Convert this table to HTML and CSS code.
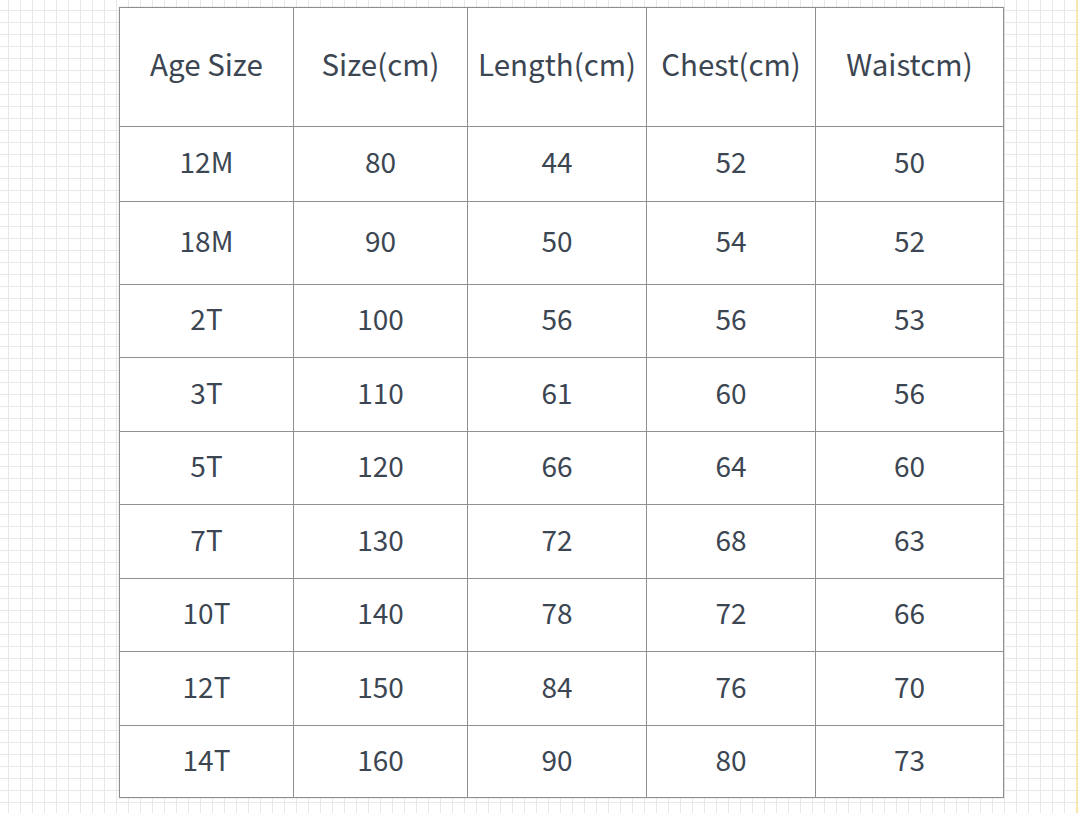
FILE: index.html
```html
<!DOCTYPE html>
<html lang="en">
<head>
<meta charset="utf-8">
<title>Size Chart</title>
<link rel="stylesheet" href="styles.css">
</head>
<body>
<div class="page">
  <div class="chart">
    <div class="cell head">Age Size</div>
    <div class="cell head">Size(cm)</div>
    <div class="cell head">Length(cm)</div>
    <div class="cell head">Chest(cm)</div>
    <div class="cell head">Waistcm)</div>

    <div class="cell">12M</div><div class="cell">80</div><div class="cell">44</div><div class="cell">52</div><div class="cell">50</div>
    <div class="cell">18M</div><div class="cell">90</div><div class="cell">50</div><div class="cell">54</div><div class="cell">52</div>
    <div class="cell">2T</div><div class="cell">100</div><div class="cell">56</div><div class="cell">56</div><div class="cell">53</div>
    <div class="cell">3T</div><div class="cell">110</div><div class="cell">61</div><div class="cell">60</div><div class="cell">56</div>
    <div class="cell">5T</div><div class="cell">120</div><div class="cell">66</div><div class="cell">64</div><div class="cell">60</div>
    <div class="cell">7T</div><div class="cell">130</div><div class="cell">72</div><div class="cell">68</div><div class="cell">63</div>
    <div class="cell">10T</div><div class="cell">140</div><div class="cell">78</div><div class="cell">72</div><div class="cell">66</div>
    <div class="cell">12T</div><div class="cell">150</div><div class="cell">84</div><div class="cell">76</div><div class="cell">70</div>
    <div class="cell">14T</div><div class="cell">160</div><div class="cell">90</div><div class="cell">80</div><div class="cell">73</div>
  </div>
</div>
</body>
</html>
```

FILE: styles.css
```css
html, body {
  margin: 0;
  padding: 0;
}
body {
  width: 1079px;
  height: 813px;
  overflow: hidden;
  background-color: #ffffff;
  background-image:
    linear-gradient(to right, #e8e8e8 1px, transparent 1px),
    linear-gradient(to bottom, #e8e8e8 1px, transparent 1px);
  background-size: 12px 12px;
  background-position: 8px 10px;
  font-family: "Noto Sans CJK SC", "Noto Sans", sans-serif;
  color: #3c4652;
  position: relative;
}
body::after {
  content: "";
  position: absolute;
  top: 0;
  right: 1px;
  width: 2px;
  height: 813px;
  background: #f6e7b0;
}
.page {
  padding: 7px 0 0 119px;
}
.chart {
  display: grid;
  grid-template-columns: 174px 174px 179px 169px 188px;
  grid-template-rows: 119px 75px 83px 73px 74px 73px 74px 73px 74px 72px;
  width: 884px;
  background: #ffffff;
  border-top: 1px solid #8f8f8f;
  border-left: 1px solid #8f8f8f;
  box-shadow: 0 0 1px rgba(0,0,0,0.3);
}
.cell {
  display: flex;
  align-items: center;
  justify-content: center;
  border-right: 1.5px solid #8f8f8f;
  border-bottom: 1.5px solid #8f8f8f;
  font-size: 28px;
  line-height: 1;
  padding-bottom: 6px;
}
.head {
  font-size: 29.5px;
}
```
